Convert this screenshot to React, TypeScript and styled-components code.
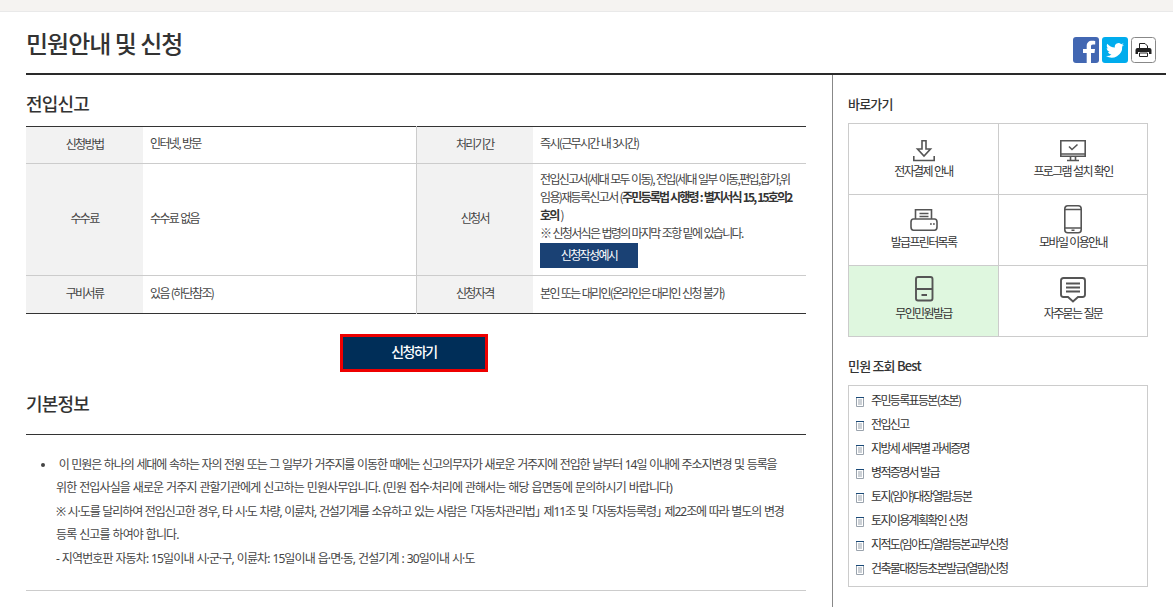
import React from "react";
import styled, { createGlobalStyle } from "styled-components";

const Global = createGlobalStyle`
  html, body { margin: 0; padding: 0; background: #fff; height: 607px; overflow: hidden; }
  body { font-family: "Noto Sans CJK KR", "Noto Sans", sans-serif; color: #333; font-size: 12px; letter-spacing: -1.65px; word-spacing: 1px; }
  * { box-sizing: border-box; }
`;

const TopBar = styled.div`
  height: 12px;
  background: #f5f3f1;
  border-bottom: 1px solid #e9e9e9;
`;
const Page = styled.div`
  width: 1140px;
  margin-left: 26px;
`;
const Header = styled.header`
  height: 63px;
  border-bottom: 2px solid #2a2a2a;
  display: flex;
  justify-content: space-between;
  padding-top: 12px;
`;
const Title = styled.h1`
  margin: 0;
  font-size: 24px;
  line-height: 38px;
  font-weight: 500;
  color: #333;
  letter-spacing: -1px;
  word-spacing: 0;
`;
const Share = styled.div`
  display: flex;
  gap: 3px;
  margin-top: 13px;
  margin-right: 10px;
  height: 26px;
`;
const Columns = styled.div`
  display: flex;
`;
const Main = styled.main`
  width: 780px;
`;
const Side = styled.aside`
  margin-left: 26px;
  width: 334px;
  height: 532px;
  border-left: 1px solid #888;
  padding: 19px 0 0 15px;
`;
const SectionTitle = styled.h2`
  margin: 0;
  font-size: 18px;
  font-weight: 500;
  line-height: 28px;
  letter-spacing: -0.8px;
  color: #333;
`;
const FirstTitle = styled(SectionTitle)`
  padding-top: 14px;
  height: 51px;
`;
const Table = styled.table`
  width: 780px;
  table-layout: fixed;
  border-collapse: collapse;
  border-top: 1px solid #333;
  border-bottom: 1px solid #333;
  color: #444;
`;
const Th = styled.th<{ $split?: boolean }>`
  width: 117px;
  background: #f2f2f2;
  font-weight: 400;
  text-align: center;
  padding: 0 0 4px;
  border-bottom: 1px solid #ccc;
  ${p => p.$split && "border-left: 1px solid #ccc;"}
  tr:last-child & { border-bottom: 0; }
`;
const Td = styled.td`
  padding: 0 7px 4px;
  line-height: 18px;
  border-bottom: 1px solid #ccc;
  tr:last-child & { border-bottom: 0; }
`;
const FormCell = styled(Td)`
  padding: 6px 7px 0;
  vertical-align: top;
`;
const Row = styled.tr<{ $h: number }>`
  height: ${p => p.$h}px;
`;
const Strong = styled.strong`
  font-weight: 700;
  color: #333;
  letter-spacing: -1.8px;
`;
const SmallBtn = styled.span`
  display: block;
  width: 98px;
  height: 25px;
  line-height: 24px;
  background: #1a4174;
  color: #fff;
  text-align: center;
  margin: 1px 0 7px;
`;
const ApplyWrap = styled.div`
  display: flex;
  justify-content: center;
  padding-top: 20px;
  padding-right: 4px;
`;
const Apply = styled.button`
  width: 148px;
  height: 38px;
  padding: 0 0 5px;
  background: #002e58;
  border: 3px solid #ee0000;
  color: #fff;
  font: 500 14px "Noto Sans CJK KR", sans-serif;
  letter-spacing: -1.5px;
`;
const InfoHead = styled.div`
  height: 63px;
  padding-top: 17px;
  border-bottom: 1px solid #333;
`;
const Info = styled.div`
  height: 156px;
  border-bottom: 1px solid #ccc;
`;
const List = styled.ul`
  margin: 0;
  padding: 18px 0 0 30px;
  line-height: 23.4px;
  color: #444;
  font-family: "Noto Sans", "Noto Sans CJK KR", sans-serif;
  font-size: 12px;
  letter-spacing: -0.88px;
  word-spacing: 0.6px;
`;
const Tight = styled.span`
  letter-spacing: -1.07px;
`;
const OpenMark = styled.span`
  margin-left: -5px;
`;
const CloseMark = styled.span`
  margin-right: -5px;
`;
const SideTitle = styled.h3`
  margin: 0;
  font-size: 13px;
  line-height: 20px;
  font-weight: 500;
  color: #333;
  letter-spacing: -0.8px;
  word-spacing: 0;
`;
const Grid = styled.div`
  margin-top: 9px;
  width: 300px;
  height: 214px;
  border: 1px solid #ccc;
  display: grid;
  grid-template-columns: 150px 148px;
  grid-template-rows: 71px 71px 70px;
`;
const Cell = styled.div<{ $green?: boolean; $right?: boolean; $bottom?: boolean }>`
  background: ${p => (p.$green ? "#dff7df" : "#fff")};
  border-right: ${p => (p.$right ? "0" : "1px solid #ccc")};
  border-bottom: ${p => (p.$bottom ? "0" : "1px solid #ccc")};
  display: flex;
  flex-direction: column;
  align-items: center;
  padding-top: 12px;
  color: #333;
  line-height: 18px;
`;
const IconWrap = styled.svg`
  display: block;
  width: 30px;
  height: 30px;
  overflow: visible;
  fill: none;
  stroke: #555;
  stroke-width: 1.6;
  margin-bottom: -4px;
`;
const BestTitle = styled(SideTitle)`
  margin-top: 19px;
`;
const BestBox = styled.ul`
  list-style: none;
  margin: 9px 0 0;
  padding: 1px 0 0 7px;
  width: 300px;
  height: 202px;
  border: 1px solid #ccc;
`;
const BestItem = styled.li`
  display: flex;
  align-items: center;
  gap: 7px;
  height: 24px;
  color: #333;
`;
const DocIcon = styled.svg`
  width: 8px;
  height: 10px;
  margin-top: 6px;
  flex: none;
  fill: none;
  stroke: #9aa3ad;
  stroke-width: 1;
`;

const Doc = () => (
  <DocIcon viewBox="0 0 8 10">
    <path d="M.5.5h7v9h-7z" />
    <path d="M2 3h4M2 5h4M2 7h4" />
    <path d="M0 .5h8" stroke="#1a4a78" />
  </DocIcon>
);

const links = [
  {
    t: "전자결제 안내",
    i: <path d="M13 4.800h4V13h4.500L15 20 8.500 13H13zM4.800 20v4.500h20.400V20" />,
  },
  {
    t: "프로그램 설치 확인",
    i: (
      <>
        <path d="M2.800 4.800h24.400v15.500H2.800zM2.800 18h24.400" />
        <path d="M11 10.500l3 3 5.500-5M12.500 20.300v4M17.500 20.300v4M9 24.500h12" />
      </>
    ),
  },
  {
    t: "발급프린터목록",
    i: (
      <>
        <path d="M6.500 12V2.800h16V12M10.500 6.500h9M10.500 9.500h9" />
        <path d="M4.500 12h21q2.500 0 2.500 3v5q0 3.200-2.500 3.200h-21Q2 23.200 2 20v-5q0-3 2.500-3z" />
        <path d="M21 17h1.800M24 17h1.800" />
      </>
    ),
  },
  {
    t: "모바일 이용안내",
    i: (
      <>
        <rect x="6.800" y="-1.200" width="16.400" height="27" rx="3" />
        <path d="M6.800 2.500h16.400M6.800 21h16.400M13.500 23.300h3" />
      </>
    ),
  },
  {
    t: "무인민원발급",
    g: true,
    i: (
      <>
        <rect x="7" y="-1" width="16.500" height="23.500" rx="2" strokeWidth="1.900" />
        <path d="M7 11h16.500M12.500 17h5.500" strokeWidth="1.900" />
      </>
    ),
  },
  {
    t: "자주묻는 질문",
    i: (
      <path
        d="M5.500 0h19Q27 0 27 2.500v14q0 2.500-2.500 2.500H20l-5 4.500L10 19H5.500Q3 19 3 16.500v-14Q3 0 5.500 0zM8 5.500h14M8 9.500h14M8 13.500h14"
        strokeWidth="1.900"
      />
    ),
  },
];

const best = [
  "주민등록표등본(초본)",
  "전입신고",
  "지방세 세목별 과세증명",
  "병적증명서 발급",
  "토지(임야)대장열람.등본",
  "토지이용계획확인 신청",
  "지적도(임야도)열람등본교부신청",
  "건축물대장등초본발급(열람)신청",
];

export default function App() {
  return (
    <>
      <Global />
      <TopBar />
      <Page>
        <Header>
          <Title>민원안내 및 신청</Title>
          <Share>
            <svg width="26" height="26" viewBox="0 0 26 26">
              <rect width="26" height="26" rx="3" fill="#4267b2" />
              <path d="M18 26V16h3.500l.5-4h-4V9.500c0-1.200.4-2 2-2h2.200V4c-.4 0-1.700-.2-3.200-.2-3.200 0-5.300 2-5.300 5.400V12H10v4h3.700v10z" fill="#fff" />
            </svg>
            <svg width="26" height="26" viewBox="0 0 26 26">
              <rect width="26" height="26" rx="3" fill="#00aced" />
              <path d="M22 7.700c-.7.300-1.400.5-2.100.6.800-.5 1.300-1.200 1.600-2-.7.400-1.500.7-2.300.9a3.700 3.700 0 0 0-6.300 3.400c-3-.2-5.800-1.600-7.600-3.900-1 1.700-.5 3.800 1.100 4.900-.6 0-1.200-.2-1.700-.5 0 1.800 1.300 3.300 3 3.700-.5.100-1.100.2-1.700.1.500 1.500 1.900 2.500 3.500 2.600A7.500 7.500 0 0 1 4 19a10.500 10.500 0 0 0 16.200-9.400c.7-.5 1.300-1.100 1.800-1.900z" fill="#fff" />
            </svg>
            <svg width="25" height="26" viewBox="0 0 25 26">
              <rect x=".5" y=".5" width="24" height="25" rx="3" fill="#fff" stroke="#888" />
              <path d="M8.500 6.500h5.500l2.500 2.500v2.500h-8z" fill="#fff" stroke="#222" />
              <path d="M6.500 11h12q2 0 2 2v4h-2.500v-2H7v2H4.500v-4q0-2 2-2z" fill="#222" />
              <path d="M8.500 16h8v3.500h-8z" fill="#fff" stroke="#222" />
            </svg>
          </Share>
        </Header>
        <Columns>
          <Main>
            <FirstTitle>전입신고</FirstTitle>
            <Table>
              <tbody>
                <Row $h={37}>
                  <Th>신청방법</Th>
                  <Td>인터넷, 방문</Td>
                  <Th $split>처리기간</Th>
                  <Td>즉시(근무시간 내 3시간)</Td>
                </Row>
                <Row $h={112}>
                  <Th>수수료</Th>
                  <Td>수수료 없음</Td>
                  <Th $split>신청서</Th>
                  <FormCell>
                    전입신고서(세대 모두 이동), 전입(세대 일부 이동,편입,합가,위
                    <br />
                    임용)재등록신고서 (<Strong>주민등록법 시행령 : 별지서식 15, 15호의2</Strong>
                    <br />
                    <Strong>호의</Strong> )
                    <br />
                    ※ 신청서식은 법령의 마지막 조항 밑에 있습니다.
                    <SmallBtn>신청작성예시</SmallBtn>
                  </FormCell>
                </Row>
                <Row $h={38}>
                  <Th>구비서류</Th>
                  <Td>있음 (하단참조)</Td>
                  <Th $split>신청자격</Th>
                  <Td>본인 또는 대리인(온라인은 대리인 신청 불가)</Td>
                </Row>
              </tbody>
            </Table>
            <ApplyWrap>
              <Apply>신청하기</Apply>
            </ApplyWrap>
            <InfoHead>
              <SectionTitle>기본정보</SectionTitle>
            </InfoHead>
            <Info>
              <List>
                <li>
                  <Tight>&nbsp;이 민원은 하나의 세대에 속하는 자의 전원 또는 그 일부가 거주지를 이동한 때에는 신고의무자가 새로운 거주지에 전입한 날부터 14일 이내에 주소지변경 및 등록을</Tight>
                  <br />
                  위한 전입사실을 새로운 거주지 관할기관에게 신고하는 민원사무입니다. (민원 접수·처리에 관해서는 해당 읍면동에 문의하시기 바랍니다)
                  <br />
                  <Tight>※ 시·도를 달리하여 전입신고한 경우, 타 시·도 차량, 이륜차, 건설기계를 소유하고 있는 사람은 <OpenMark>「</OpenMark>자동차관리법<CloseMark>」</CloseMark> 제11조 및 <OpenMark>「</OpenMark>자동차등록령<CloseMark>」</CloseMark> 제22조에 따라 별도의 변경</Tight>
                  <br />
                  등록 신고를 하여야 합니다.
                  <br />
                  - 지역번호판 자동차: 15일이내 시·군·구, 이륜차: 15일이내 읍·면·동, 건설기계 : 30일이내 시·도
                </li>
              </List>
            </Info>
          </Main>
          <Side>
            <SideTitle>바로가기</SideTitle>
            <Grid>
              {links.map((l, i) => (
                <Cell key={l.t} $green={l.g} $right={i % 2 === 1} $bottom={i >= 4}>
                  <IconWrap viewBox="0 0 30 30">{l.i}</IconWrap>
                  {l.t}
                </Cell>
              ))}
            </Grid>
            <BestTitle>민원 조회 Best</BestTitle>
            <BestBox>
              {best.map(b => (
                <BestItem key={b}>
                  <Doc />
                  {b}
                </BestItem>
              ))}
            </BestBox>
          </Side>
        </Columns>
      </Page>
    </>
  );
}
